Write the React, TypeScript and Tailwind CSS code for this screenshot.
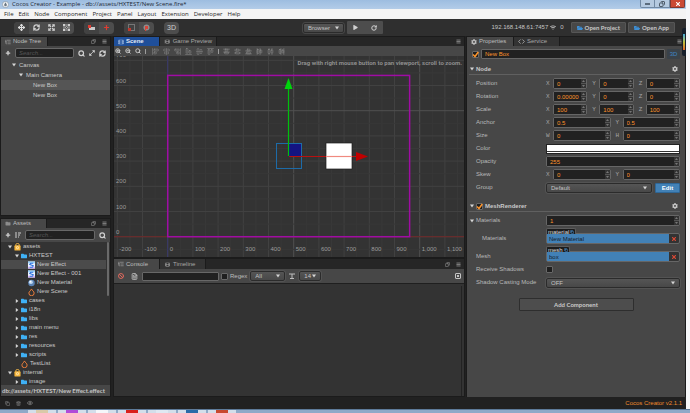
import { useState } from 'react'
import type { ReactNode } from 'react'
import {
  AlignCenterHorizontal, AlignCenterVertical, AlignEndHorizontal, AlignEndVertical,
  AlignHorizontalDistributeCenter, AlignHorizontalDistributeEnd, AlignHorizontalDistributeStart,
  AlignStartHorizontal, AlignStartVertical, AlignVerticalDistributeCenter, AlignVerticalDistributeEnd,
  AlignVerticalDistributeStart, Ban, Code, Copy, Expand, Eye, FileText, ListTree, Maximize2, Menu, Move, Plus,
  RefreshCw, RotateCw, Search, Trash2, ZoomIn, ZoomOut,
} from 'lucide-react'
import { FaCog, FaFilm, FaFolder, FaFolderOpen, FaPlay, FaTimes, FaWifi } from 'react-icons/fa'
import clsx from 'clsx'

const menus = ['File', 'Edit', 'Node', 'Component', 'Project', 'Panel', 'Layout', 'Extension', 'Developer', 'Help']

type Asset = { name: string; kind: 'db' | 'folder' | 'effect' | 'material' | 'scene'; depth: 0 | 1 | 2; open?: boolean }

const assets: Asset[] = [
  { name: 'assets', kind: 'db', depth: 0, open: true },
  { name: 'HXTEST', kind: 'folder', depth: 1, open: true },
  { name: 'New Effect', kind: 'effect', depth: 2 },
  { name: 'New Effect - 001', kind: 'effect', depth: 2 },
  { name: 'New Material', kind: 'material', depth: 2 },
  { name: 'New Scene', kind: 'scene', depth: 2 },
  { name: 'cases', kind: 'folder', depth: 1 },
  { name: 'i18n', kind: 'folder', depth: 1 },
  { name: 'libs', kind: 'folder', depth: 1 },
  { name: 'main menu', kind: 'folder', depth: 1 },
  { name: 'res', kind: 'folder', depth: 1 },
  { name: 'resources', kind: 'folder', depth: 1 },
  { name: 'scripts', kind: 'folder', depth: 1 },
  { name: 'TestList', kind: 'scene', depth: 1 },
  { name: 'internal', kind: 'db', depth: 0, open: true },
  { name: 'image', kind: 'folder', depth: 1 },
]

const depthCls = ['pl-[7px]', 'pl-[14px]', 'pl-[21px]']

function Arrow({ open }: { open?: boolean }) {
  return (
    <svg viewBox="0 0 4 4" className="h-1 w-1 shrink-0" fill="#d5d5d5">
      <path d={open ? 'M0 .5h4L2 3.5z' : 'M.8 0v4L3.4 2z'} />
    </svg>
  )
}

function AssetIcon({ kind }: { kind: Asset['kind'] }) {
  if (kind === 'folder') return <FaFolder className="h-[6px] w-[6px] shrink-0 text-[#3fb1f5]" />
  return (
    <svg viewBox="0 0 16 16" className="h-2 w-[7px] shrink-0" fill="none">
      {kind === 'db' && (
        <>
          <path d="M4 5V3a4 3 0 0 1 8 0v2" stroke="#fbbf4c" strokeWidth="2" />
          <rect x="1" y="4" width="14" height="12" rx="2" fill="#f7b63c" />
          <circle cx="8" cy="9.5" r="2.5" stroke="#fff2cf" strokeWidth="1.8" />
        </>
      )}
      {kind === 'effect' && (
        <>
          <rect width="16" height="16" fill="#eef4ff" />
          <path d="M0 0h16v4H0z" fill="#9bd3fb" />
          <path d="M0 12h16v4H0z" fill="#d3b3f6" />
          <path d="M12 4H6L4 7l8 3-2 3H4" stroke="#2a70e0" strokeWidth="2.4" />
        </>
      )}
      {kind === 'material' && (
        <>
          <circle cx="8" cy="8" r="7.5" fill="#5b83b5" />
          <circle cx="6.5" cy="6" r="4.5" fill="#b9d3ef" />
          <circle cx="5.5" cy="5" r="2" fill="#fff" />
        </>
      )}
      {kind === 'scene' && (
        <path d="M8 1c1 4 6 5 6 9.500a5.500 5.500 0 0 1-12 0C2 7 6 5.500 8 1z" stroke="#f0803c" strokeWidth="2.200" />
      )}
    </svg>
  )
}

function Tab({ icon, label, cls }: { icon: ReactNode; label: string; cls?: string }) {
  return (
    <button
      className={clsx(
        'flex h-full items-center gap-[2px] border-r border-[#1b1b1b] px-1 text-left whitespace-nowrap',
        cls ?? 'bg-[#333] text-[#a8a8a8]',
      )}
    >
      {icon}
      {label}
    </button>
  )
}

function PanelActions({ popup = true }: { popup?: boolean }) {
  return (
    <div className="ml-auto flex items-center gap-[6px] pr-[3px] text-[#8c8c8c]">
      {popup && <button aria-label="Pop out"><Copy className="h-[5px] w-[5px] -scale-x-100" strokeWidth={3} /></button>}
      <button aria-label="Panel menu"><Menu className="h-[5px] w-[5px]" strokeWidth={4} /></button>
    </div>
  )
}

function ToolGroup({ children }: { children: ReactNode }) {
  return <div className="flex h-3 overflow-hidden rounded-sm bg-[#4d4d4d]">{children}</div>
}

function Tool({ label, on, children }: { label: string; on?: boolean; children: ReactNode }) {
  return (
    <button aria-label={label} className={clsx('flex w-[15px] items-center justify-center', on ? 'bg-[#424242] text-[#e0e0e0]' : 'text-[#cfcfcf]')}>
      {children}
    </button>
  )
}

function Select({ label, options, className }: { label: string; options: string[]; className?: string }) {
  return (
    <div className={clsx('relative h-[10px] rounded-[2px] border border-[#2b2b2b] bg-gradient-to-b from-[#555] to-[#484848] outline outline-[#5f5f5f]/50', className)}>
      <select aria-label={label} className="block h-full w-full appearance-none pl-1 leading-[8px] text-[#c4c4c4]">
        {options.map((o) => <option key={o}>{o}</option>)}
      </select>
      <span className="pointer-events-none absolute top-[2px] right-1"><Arrow open /></span>
    </div>
  )
}

function NumField({ axis, label, value }: { axis?: string; label: string; value: string }) {
  return (
    <label className="flex min-w-0 flex-1 items-center">
      {axis && <span className="w-[7px] shrink-0 font-['Liberation_Mono',monospace] text-[#a5a5a5]">{axis}</span>}
      <span className="flex h-[11px] min-w-0 flex-1 rounded-[2px] border border-[#666] bg-[#545454]">
        <input aria-label={label} defaultValue={value} className="h-full min-w-0 flex-1 bg-[#212121] pl-[3px] text-[#fd942b]" />
        <svg viewBox="0 0 5 9" className="h-[9px] w-[5px] shrink-0">
          <path d="M0 0h5v4H0zM0 5h5v4H0z" fill="#333" />
          <path d="M1 3l1.500-2L4 3zM1 6l1.500 2L4 6z" fill="#777" />
        </svg>
      </span>
    </label>
  )
}

function Prop({ label, indent, children }: { label: string; indent?: boolean; children: ReactNode }) {
  return (
    <div className="flex min-h-[11px] items-center pr-[5px] pl-[9px]">
      <span className={clsx('w-[70px] shrink-0 whitespace-nowrap text-[#b8b8b8]', indent && 'pl-[6px]')}>{label}</span>
      <div className="flex min-w-0 flex-1 items-center gap-[5px]">{children}</div>
    </div>
  )
}

function AssetRef({ type, value }: { type: string; value: string }) {
  return (
    <div className="relative flex-1">
      <span className="absolute -top-[5px] left-0 flex h-[6px] items-center gap-[1px] rounded-t-[2px] border border-b-0 border-[#5c5c5c] bg-[#1c1c1c] px-[1px] text-[6px] leading-[6px] text-[#dcdcdc]">
        {type}
        <Copy className="h-1 w-1 text-[#4281b6]" strokeWidth={4} />
      </span>
      <div className="flex h-[11px] rounded-[2px] border border-[#666] bg-[#333]">
        <input aria-label={type} readOnly value={value} className="h-full min-w-0 flex-1 bg-[#4281b6] px-[2px] text-[#15202c]" />
        <button aria-label={'Clear ' + type} className="flex w-[10px] items-center justify-center text-[#e04a35]">
          <FaTimes className="h-[6px] w-[6px]" />
        </button>
      </div>
    </div>
  )
}

function Check({ label, on }: { label: string; on?: boolean }) {
  const [checked, setChecked] = useState(!!on)
  return (
    <span className="relative flex h-[7px] w-[7px] shrink-0">
      <input
        type="checkbox"
        aria-label={label}
        checked={checked}
        onChange={(e) => setChecked(e.target.checked)}
        className="h-[7px] w-[7px] appearance-none rounded-[1px] border border-[#686868] bg-[#1f1f1f]"
      />
      {checked && (
        <svg viewBox="0 0 7 7" className="pointer-events-none absolute inset-0 h-[7px] w-[7px]" fill="none" stroke="#fd942b" strokeWidth="1.500">
          <path d="M1 3.500L3 5.500L6.300 1" />
        </svg>
      )}
    </span>
  )
}

function SearchInput({ label }: { label: string }) {
  return (
    <input
      aria-label={label}
      placeholder="Search..."
      className="h-[10px] min-w-0 flex-1 rounded-[2px] border border-[#686868] bg-[#212121] px-[3px] italic placeholder:text-[#565656]"
    />
  )
}

// scene view: world units to view pixels
const px = (u: number) => 54.7 + u * 0.252
const py = (u: number) => 180.7 - u * 0.252
const xTicks = [-200, -100, 0, 100, 200, 300, 400, 500, 600, 700, 800, 900, 1000, 1100]
const yTicks = [0, 100, 200, 300, 400, 500, 600, 700]
const tickColor = (u: number) => (u % 500 === 0 ? '#505050' : '#414141')

function SceneView() {
  return (
    <svg width="352" height="201" viewBox="1 0 352 201" className="block" fontSize="6" fill="#9c9c9c">
      {xTicks.map((u) => (
        <g key={u} strokeWidth="1">
          <path d={`M${px(u)} 0V202`} stroke={tickColor(u)} />
          <path d={`M${px(u + 50)} 0V202`} stroke="#383838" />
        </g>
      ))}
      {yTicks.concat(-100).map((u) => (
        <g key={u} strokeWidth="1">
          <path d={`M0 ${py(u)}H354`} stroke={tickColor(u)} />
          <path d={`M0 ${py(u + 50)}H354`} stroke="#383838" />
        </g>
      ))}
      <path d={`M0 ${py(0)}H354`} stroke="#6e2626" />
      <path d={`M${px(0)} 0V202`} stroke="#35356a" />
      <rect x={px(0)} y={py(640)} width={960 * 0.252} height={640 * 0.252} fill="none" stroke="#a00ca4" strokeWidth="1.500" />
      {xTicks.map((u) => (
        <text key={u} x={px(u) + 2} y="195">{u.toLocaleString('en-US')}</text>
      ))}
      {yTicks.map((u) => (
        <text key={u} x="3" y={py(u) - 3}>{u}</text>
      ))}
      <rect x="213" y="87" width="26" height="26" fill="#fff" stroke="#1c1c1c" strokeWidth=".7" />
      <rect x="163.500" y="87.500" width="25" height="25" fill="none" stroke="#1d6ba8" />
      <rect x="176" y="88" width="12" height="12" fill="#141482" />
      <path d="M175.500 100V31" stroke="#00c00c" strokeWidth="1.200" />
      <path d="M171.500 33L175.500 22L179.500 33z" fill="#00d40c" />
      <path d="M176 100.500H213M239 100.500H243" stroke="#b81010" strokeWidth="1.200" />
      <path d="M213 100.500H239" stroke="#f08a80" strokeWidth="1.200" />
      <path d="M243 96L255 100.500L243 105z" fill="#c00000" />
    </svg>
  )
}

const alignTools = [
  AlignStartVertical, AlignCenterVertical, AlignEndVertical, AlignEndHorizontal, AlignCenterHorizontal, AlignStartHorizontal,
]
const distributeTools = [
  AlignVerticalDistributeStart, AlignVerticalDistributeCenter, AlignVerticalDistributeEnd,
  AlignHorizontalDistributeStart, AlignHorizontalDistributeCenter, AlignHorizontalDistributeEnd,
]

function TitleBar() {
  return (
    <header className="shrink-0 font-['Open_Sans',sans-serif]">
      <div className="flex h-[9px] items-start bg-gradient-to-b from-[#9dbde0] to-[#b3cce8] pl-[2px] text-[#1c2733]">
        <svg viewBox="0 0 16 16" className="mt-[1px] mr-[3px] h-[7px] w-[7px]">
          <circle cx="8" cy="8" r="7" fill="#f2f5f8" stroke="#66727e" />
          <path d="M8 3c1 3 3 4 3 6a3 3 0 0 1-6 0c0-2 2-3 3-6z" fill="#6a7682" />
        </svg>
        <h1 className="leading-[9px] whitespace-nowrap">Cocos Creator - Example - db://assets/HXTEST/New Scene.fire*</h1>
        <div className="ml-auto flex h-2 pr-[1px]">
          <button aria-label="Minimize" className="flex w-[15px] items-center justify-center rounded-bl-[2px] border border-t-0 border-[#7189a3] bg-[#b5cae0]">
            <span className="h-[2px] w-[5px] border border-[#5c6c7c] bg-white" />
          </button>
          <button aria-label="Restore" className="flex w-[15px] items-center justify-center border border-t-0 border-l-0 border-[#7189a3] bg-[#b5cae0]">
            <Copy className="h-[6px] w-[6px] -scale-x-100 text-[#4f5d6b]" strokeWidth={4} />
          </button>
          <button aria-label="Close" className="flex w-[15px] items-center justify-center rounded-br-[2px] border border-t-0 border-[#7c3a33] bg-[#cb4a35] text-white">
            <FaTimes className="h-[6px] w-[6px]" />
          </button>
        </div>
      </div>
      <nav className="flex h-[10px] items-center gap-[5px] bg-[#f4f4f4] pl-1 text-[#1f1f1f]">
        {menus.map((m) => <button key={m}>{m}</button>)}
      </nav>
    </header>
  )
}

function Toolbar() {
  return (
    <div className="grid h-[17px] shrink-0 grid-cols-[1fr_auto_1fr] items-center bg-[#2f2f2f]">
      <div className="flex gap-[10px] pl-[14px]">
        <ToolGroup>
          <Tool label="Move" on><Move className="h-[7px] w-[7px]" strokeWidth={4} /></Tool>
          <Tool label="Rotate"><RefreshCw className="h-[7px] w-[7px]" strokeWidth={4} /></Tool>
          <Tool label="Scale"><Expand className="h-[7px] w-[7px]" strokeWidth={4} /></Tool>
          <Tool label="Rect">
            <svg viewBox="0 0 14 14" className="h-[7px] w-[7px]" fill="none" stroke="currentColor">
              <path d="M2 2h10v10H2z" strokeWidth="1.500" />
              <path d="M0 0h4v4H0zM10 0h4v4h-4zM0 10h4v4H0zM10 10h4v4h-4z" fill="currentColor" stroke="none" />
              <circle cx="7" cy="7" r="2" strokeWidth="1.500" />
            </svg>
          </Tool>
        </ToolGroup>
        <ToolGroup>
          <Tool label="Anchor" on>
            <svg viewBox="0 0 7 6" className="h-[6px] w-[7px]"><path d="M1 2h6v3H1z" fill="#c8c8c8" /><path d="M0 0h3v3H0z" fill="#e03c32" /></svg>
          </Tool>
          <Tool label="Center"><Plus className="h-[7px] w-[7px] text-[#e03c32]" strokeWidth={4} /></Tool>
        </ToolGroup>
        <ToolGroup>
          <Tool label="Local" on>
            <svg viewBox="0 0 7 7" className="h-[7px] w-[7px]" fill="none"><path d="M.5.5h6v6h-6z" stroke="#aaa" strokeDasharray="1 1" /><path d="M0 4h3v3H0z" fill="#c0392f" /></svg>
          </Tool>
          <Tool label="Global">
            <svg viewBox="0 0 7 7" className="h-[7px] w-[7px]"><circle cx="3.500" cy="3.500" r="3" fill="#8d8d8d" /><path d="M2 2h3v3H3v2H2z" fill="#d6453a" /></svg>
          </Tool>
        </ToolGroup>
        <ToolGroup><Tool label="3D"><span className="text-[7px]">3D</span></Tool></ToolGroup>
      </div>
      <div className="flex items-center gap-[3px]">
        <Select label="Preview platform" options={['Browser', 'Simulator']} className="w-[41px]" />
        <div className="flex h-[13px] w-9 items-center justify-around rounded-[1px] bg-[#4d4d4d] text-[#d0d0d0]">
          <button aria-label="Play"><FaPlay className="h-[5px] w-[5px]" /></button>
          <button aria-label="Reload"><RotateCw className="h-[6px] w-[6px]" strokeWidth={4} /></button>
        </div>
      </div>
      <div className="flex items-center justify-end gap-[2px] pr-[11px] whitespace-nowrap text-[#c4c4c4]">
        <span>192.168.148.61:7457</span>
        <FaWifi className="h-[5px] w-[6px]" />
        <span className="pr-[5px] pl-[2px]">0</span>
        {['Open Project', 'Open App'].map((t) => (
          <button key={t} className="flex h-[11px] items-center gap-[2px] rounded-[1px] border border-[#565656] bg-[#484848] px-[5px] font-['Lato',sans-serif] font-bold text-[#c9c9c9]">
            <FaFolderOpen className="h-[6px] w-[6px] text-[#3d8fd6]" />
            {t}
          </button>
        ))}
      </div>
    </div>
  )
}

function NodeTree() {
  const rows = [
    { name: 'Canvas', pad: 'pl-[11px]', open: true },
    { name: 'Main Camera', pad: 'pl-[18px]', open: true },
    { name: 'New Box', pad: 'pl-8', selected: true },
    { name: 'New Box', pad: 'pl-8' },
  ]
  return (
    <section className="flex h-[180px] shrink-0 flex-col border border-[#1b1b1b] bg-[#454545]">
      <div className="flex h-[9px] shrink-0 bg-[#262626]">
        <Tab label="Node Tree" icon={<ListTree className="h-[6px] w-[6px]" strokeWidth={2} />} cls="w-[47px] bg-[#474747] text-[#bdbdbd]" />
        <PanelActions />
      </div>
      <div className="flex h-[14px] shrink-0 items-center gap-1 px-1 text-[#d0d0d0]">
        <button aria-label="Add node"><Plus className="h-[6px] w-[6px]" strokeWidth={5} /></button>
        <SearchInput label="Search nodes" />
        <Search className="h-[7px] w-[7px]" strokeWidth={4} />
        <button aria-label="Expand"><Maximize2 className="h-[6px] w-[6px]" strokeWidth={4} /></button>
        <button aria-label="Refresh"><RefreshCw className="h-[7px] w-[7px]" strokeWidth={4} /></button>
      </div>
      <ul className="text-[#c9c9c9]">
        {rows.map((r, i) => (
          <li key={i} className={clsx('flex h-[10px] items-center gap-[3px]', r.pad, r.selected && 'bg-[#555]')}>
            {r.open && <Arrow open />}
            {r.name}
          </li>
        ))}
      </ul>
    </section>
  )
}

function Assets() {
  return (
    <section className="mt-[2px] flex min-h-0 flex-1 flex-col border border-[#1b1b1b] bg-[#333]">
      <div className="flex h-[9px] shrink-0 bg-[#262626]">
        <Tab label="Assets" icon={<FaFolder className="h-[5px] w-[6px] text-[#8c8c8c]" />} cls="w-[46px] bg-[#474747] text-[#bdbdbd]" />
        <PanelActions />
      </div>
      <div className="flex h-[14px] shrink-0 items-center gap-1 bg-[#474747] px-1 text-[#d0d0d0]">
        <button aria-label="Add asset"><Plus className="h-[6px] w-[6px]" strokeWidth={5} /></button>
        <button aria-label="Sort">
          <svg viewBox="0 0 6 6" className="h-[6px] w-[6px]" stroke="currentColor" fill="none"><path d="M1 0v6M3 1h3M3 3h2M3 5h1" /></svg>
        </button>
        <SearchInput label="Search assets" />
        <Search className="h-[7px] w-[7px]" strokeWidth={4} />
      </div>
      <div className="flex min-h-0 flex-1 overflow-hidden">
        <ul className="min-w-0 flex-1 text-[#c9c9c9]">
          {assets.map((a, i) => (
            <li key={a.name} className={clsx('flex h-[9px] items-center gap-[2px] whitespace-nowrap', depthCls[a.depth], i === 2 && 'bg-[#4b4b4b]')}>
              {a.kind === 'folder' || a.kind === 'db' ? <Arrow open={a.open} /> : <span className="w-1 shrink-0" />}
              <AssetIcon kind={a.kind} />
              {a.name}
            </li>
          ))}
        </ul>
        <div className="mr-[1px] ml-[1px] h-[54px] w-[2px] rounded-full bg-[#6a6a6a]" />
      </div>
      <div className="flex h-[11px] shrink-0 items-center bg-[#474747] pl-[1px] font-['Lato',sans-serif] font-bold whitespace-nowrap text-[#c4c4c4]">
        db://assets/HXTEST/New Effect.effect
      </div>
    </section>
  )
}

function Scene() {
  return (
    <section className="flex h-[222px] shrink-0 flex-col border border-[#1b1b1b] bg-[#333]">
      <div className="flex h-[9px] shrink-0 bg-[#262626]">
        <Tab label="Scene" icon={<FaFilm className="h-[6px] w-[6px] text-[#9db8dd]" />} cls="w-[46px] bg-[#1f4f9a] font-bold text-[#e2e8f2]" />
        <Tab label="Game Preview" icon={<FaFilm className="h-[5px] w-[7px]" />} cls="w-[57px] bg-[#333] text-[#a8a8a8]" />
        <PanelActions popup={false} />
      </div>
      <div className="flex h-[10px] shrink-0 items-center gap-1 bg-[#474747] pl-[1px] text-[#8c8c8c]">
        {[ZoomIn, ZoomOut, Search].map((Icon, i) => (
          <button key={i} aria-label={['Zoom in', 'Zoom out', 'Fit view'][i]} className="text-[#c4c4c4]"><Icon className="h-[6px] w-[6px]" strokeWidth={4} /></button>
        ))}
        <span className="mr-[2px] h-[5px] w-px bg-[#9c9c9c]" />
        {alignTools.map((Icon, i) => (
          <button key={i} aria-label={'Align ' + (i + 1)}><Icon className="h-[7px] w-[7px]" strokeWidth={2} /></button>
        ))}
        <span className="h-[5px] w-px bg-[#9c9c9c]" />
        {distributeTools.map((Icon, i) => (
          <button key={i} aria-label={'Distribute ' + (i + 1)}><Icon className="h-[7px] w-[7px]" strokeWidth={2} /></button>
        ))}
      </div>
      <div className="relative min-h-0 flex-1 overflow-hidden">
        <SceneView />
        <p className="absolute top-[2px] right-[2px] font-['Roboto',sans-serif] font-bold whitespace-nowrap text-[#8f8f8f]">
          Drag with right mouse button to pan viewport, scroll to zoom.
        </p>
      </div>
    </section>
  )
}

function Console() {
  return (
    <section className="flex min-h-0 flex-1 flex-col border border-[#1b1b1b] bg-[#333]">
      <div className="flex h-[10px] shrink-0 bg-[#262626]">
        <Tab label="Console" icon={<ListTree className="h-[6px] w-[6px]" strokeWidth={2} />} cls="w-[46px] bg-[#474747] text-[#bdbdbd]" />
        <Tab label="Timeline" icon={<FaFilm className="h-[5px] w-[7px]" />} cls="w-[46px] bg-[#333] text-[#a8a8a8]" />
        <PanelActions />
      </div>
      <div className="flex h-[14px] shrink-0 items-center bg-[#474747] pl-1 text-[#bdbdbd]">
        <button aria-label="Clear"><Ban className="h-[6px] w-[6px] text-[#d8675c]" strokeWidth={4} /></button>
        <button aria-label="Log file" className="mr-1 ml-[7px]"><FileText className="h-[7px] w-[7px]" strokeWidth={3} /></button>
        <input aria-label="Filter" className="h-[9px] w-[77px] rounded-[1px] border border-[#686868] bg-[#212121] px-[2px]" />
        <label className="ml-[2px] flex items-center gap-[2px]"><Check label="Regex" />Regex</label>
        <Select label="Level" options={['All', 'Log', 'Warn', 'Error']} className="ml-[3px] w-[35px]" />
        <svg viewBox="0 0 6 6" className="mx-1 h-[6px] w-[6px]" stroke="currentColor" fill="none"><path d="M0 1h6M3 1v4M1 5.500h4" /></svg>
        <Select label="Font size" options={['14', '16', '18']} className="w-[22px]" />
        <button aria-label="Collapse" className="mr-[3px] ml-auto flex h-[6px] w-[6px] items-center justify-center rounded-[1px] border border-[#c4c4c4]">
          <span className="h-[2px] w-[2px] bg-[#c4c4c4]" />
        </button>
      </div>
      <div className="flex flex-1 justify-end border-t border-[#1f1f1f] bg-[#333] pt-[2px] pr-[2px]">
        <div className="w-px bg-[#222]" />
      </div>
    </section>
  )
}

function SectionHead({ title, check }: { title: string; check?: boolean }) {
  return (
    <div className="mr-[5px] ml-[2px] flex h-[11px] items-center gap-[2px] border-b border-[#606060] pl-[1px] font-bold text-[#c9c9c9]">
      <Arrow open />
      {check && <Check label={title} on />}
      <h2>{title}</h2>
      <button aria-label={title + ' options'} className="mr-[2px] ml-auto"><FaCog className="h-[6px] w-[6px]" /></button>
    </div>
  )
}

function Properties() {
  return (
    <section className="flex w-[220px] shrink-0 flex-col border-x border-t border-[#1b1b1b] bg-[#474747]">
      <div className="flex h-[9px] shrink-0 bg-[#262626]">
        <Tab label="Properties" icon={<FaCog className="h-[6px] w-[6px]" />} cls="w-[47px] bg-[#474747] text-[#bdbdbd]" />
        <Tab label="Service" icon={<Code className="h-[7px] w-[7px]" strokeWidth={3} />} cls="w-[46px] bg-[#333] text-[#a8a8a8]" />
        <PanelActions popup={false} />
      </div>
      <div className="mt-[3px] flex h-[10px] items-center gap-[2px] pr-[5px] pl-[5px]">
        <Check label="Node active" on />
        <input aria-label="Node name" defaultValue="New Box" className="h-full min-w-0 flex-1 rounded-[1px] border border-[#666] bg-[#212121] px-[3px] text-[#fd942b]" />
        <button className="h-full w-[13px] rounded-[1px] bg-[#3a4249] text-[#3f86c4]">3D</button>
      </div>
      <div className="mt-[5px]"><SectionHead title="Node" /></div>
      <div className="mt-[3px] flex flex-col gap-[2px]">
        <Prop label="Position">
          <NumField axis="X" label="Position X" value="0" /><NumField axis="Y" label="Position Y" value="0" /><NumField axis="Z" label="Position Z" value="0" />
        </Prop>
        <Prop label="Rotation">
          <NumField axis="X" label="Rotation X" value="0.00000" /><NumField axis="Y" label="Rotation Y" value="0" /><NumField axis="Z" label="Rotation Z" value="0" />
        </Prop>
        <Prop label="Scale">
          <NumField axis="X" label="Scale X" value="100" /><NumField axis="Y" label="Scale Y" value="100" /><NumField axis="Z" label="Scale Z" value="100" />
        </Prop>
        <Prop label="Anchor"><NumField axis="X" label="Anchor X" value="0.5" /><NumField axis="Y" label="Anchor Y" value="0.5" /></Prop>
        <Prop label="Size"><NumField axis="W" label="Width" value="0" /><NumField axis="H" label="Height" value="0" /></Prop>
        <Prop label="Color">
          <button aria-label="Color" className="flex h-[10px] flex-1 flex-col justify-end border border-[#222] bg-white pb-[1px]">
            <span className="h-px w-full bg-[#333]" />
          </button>
        </Prop>
        <Prop label="Opacity"><NumField label="Opacity" value="255" /></Prop>
        <Prop label="Skew"><NumField axis="X" label="Skew X" value="0" /><NumField axis="Y" label="Skew Y" value="0" /></Prop>
        <Prop label="Group">
          <Select label="Group" options={['Default']} className="flex-1" />
          <button className="-ml-[2px] h-[10px] w-[25px] rounded-[1px] border border-[#2f6797] bg-[#4281b6] font-bold text-white">Edit</button>
        </Prop>
      </div>
      <div className="mt-2"><SectionHead title="MeshRenderer" check /></div>
      <div className="mt-[3px] flex flex-col">
        <div className="flex items-center">
          <span className="-mr-[7px] pl-[3px]"><Arrow open /></span>
          <div className="flex-1"><Prop label="Materials"><NumField label="Materials count" value="1" /></Prop></div>
        </div>
        <div className="mt-[7px]"><Prop label="Materials" indent><AssetRef type="material" value="New Material" /></Prop></div>
        <div className="mt-[7px]"><Prop label="Mesh"><AssetRef type="mesh" value="box" /></Prop></div>
        <div className="mt-[2px]"><Prop label="Receive Shadows"><Check label="Receive Shadows" /></Prop></div>
        <div className="mt-[2px]"><Prop label="Shadow Casting Mode"><Select label="Shadow Casting Mode" options={['OFF', 'ON']} className="flex-1" /></Prop></div>
      </div>
      <button className="mx-auto mt-[10px] h-[13px] w-[115px] rounded-[1px] border border-[#2e2e2e] bg-[#4d4d4d] font-['Lato',sans-serif] font-bold text-[#c9c9c9]">
        Add Component
      </button>
    </section>
  )
}

// windows shell bar under the editor
function TaskBar() {
  const dots = ['bg-[#d9c9a8]', 'bg-[#b04bd8]', 'bg-[#f5f7fa]', 'bg-[#d9201c]', 'bg-[#dfe8f2]', 'bg-[#2a6aa8]', 'bg-[#c8482f]']
  return (
    <footer className="flex h-1 shrink-0 gap-[2px] border-t border-[#5d7a99] bg-[#8ea9c8] pl-7">
      {dots.map((d) => (
        <span key={d} className="flex w-[28px] justify-center bg-[#d3deea]"><span className={clsx('w-[12px]', d)} /></span>
      ))}
    </footer>
  )
}

export default function App() {
  return (
    <div className="flex h-screen flex-col overflow-hidden bg-[#f6f7f9] font-['Liberation_Sans',Arial,sans-serif] text-[6px] leading-[9px]">
      <div className="relative mr-1 flex min-h-0 flex-1 flex-col bg-[#212121]">
        <TitleBar />
        <Toolbar />
        <main className="flex min-h-0 flex-1">
          <div className="flex w-[111px] shrink-0 flex-col"><NodeTree /><Assets /></div>
          <div className="ml-[2px] flex min-w-0 flex-1 flex-col"><Scene /><Console /></div>
          <div className="ml-[1px] flex"><Properties /></div>
        </main>
        <div className="flex h-[12px] shrink-0 items-center gap-[6px] bg-[#212121] pr-1 pl-[5px] text-[#7c7c7c]">
          <Copy className="h-[5px] w-[5px]" strokeWidth={3} />
          <Trash2 className="h-[5px] w-[5px]" strokeWidth={3} />
          <Eye className="h-[6px] w-[6px]" strokeWidth={3} />
          <span className="ml-auto text-[#f08a2c]">Cocos Creator v2.1.1</span>
        </div>
        <div className="absolute top-[28px] right-0 h-7 w-1 rounded-l-[2px] bg-[#17202b] py-[6px] pl-[1px]">
          <div className="h-full w-[2px] bg-gradient-to-b from-[#3fa9d8] via-[#b8c23c] to-[#e0642c]" />
        </div>
      </div>
      <TaskBar />
    </div>
  )
}
